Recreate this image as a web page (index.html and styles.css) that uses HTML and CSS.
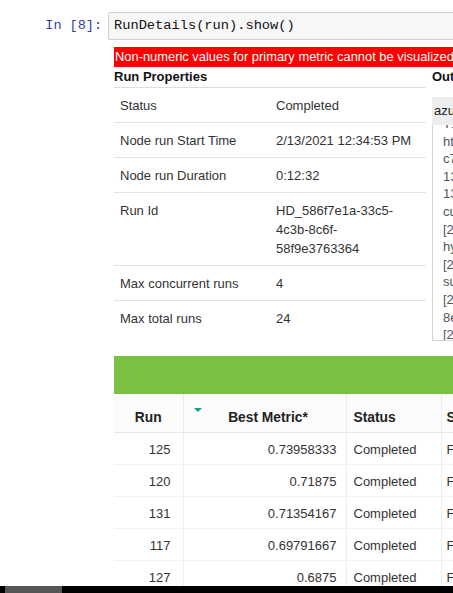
FILE: index.html
```html
<!DOCTYPE html>
<html>
<head>
<meta charset="utf-8">
<link rel="stylesheet" href="styles.css">
</head>
<body>
<div class="cell">
  <div class="input-row">
    <div class="prompt">In&nbsp;[8]:</div>
    <div class="input">RunDetails(run).show()</div>
  </div>
  <div class="output">
    <div class="error">Non-numeric values for primary metric cannot be visualized.</div>
    <div class="details">
      <div class="props">
        <div class="section-title">Run Properties</div>
        <div class="prop-row"><div class="k">Status</div><div class="v">Completed</div></div>
        <div class="prop-row"><div class="k">Node run Start Time</div><div class="v">2/13/2021 12:34:53 PM</div></div>
        <div class="prop-row"><div class="k">Node run Duration</div><div class="v">0:12:32</div></div>
        <div class="prop-row"><div class="k">Run Id</div><div class="v">HD_586f7e1a-33c5-4c3b-8c6f-58f9e3763364</div></div>
        <div class="prop-row"><div class="k">Max concurrent runs</div><div class="v">4</div></div>
        <div class="prop-row last"><div class="k">Max total runs</div><div class="v">24</div></div>
      </div>
      <div class="out">
        <div class="section-title">Output Logs</div>
        <div class="log-head">azureml-logs/hyperdrive.txt</div>
        <div class="log-box">
          <div class="log-text">
            <div>T12:34:53.611Z</div>
            <div>https://southcentralus.experiments.azureml.net</div>
            <div>c7e6d1a2-81f4-4be4-9f2c</div>
            <div>13:34:54.371556][GENERATOR][INFO]</div>
            <div>13:35:24.842316][GENERATOR][INFO]</div>
            <div>current status is running</div>
            <div>[2021-02-13T12:35:25.0135][SCHEDULER]</div>
            <div>hyperparameter sampling</div>
            <div>[2021-02-13T12:35:25.4321][SCHEDULER]</div>
            <div>successfully scheduled</div>
            <div>[2021-02-13T12:46:25.5120][CONTROLLER]</div>
            <div>8e1b24cd-run completed</div>
            <div>[2021-02-13T12:47:25.8712][CONTROLLER]</div>
          </div>
        </div>
      </div>
    </div>
    <div class="greenbar"></div>
    <table class="runs">
      <thead>
        <tr>
          <th class="c-run">Run</th>
          <th class="c-metric"><span class="sort"></span>Best Metric*</th>
          <th class="c-status">Status</th>
          <th class="c-start">Started</th>
        </tr>
      </thead>
      <tbody>
        <tr><td class="c-run">125</td><td class="c-metric">0.73958333</td><td class="c-status">Completed</td><td class="c-start">Feb 13, 2021 12:57 PM</td></tr>
        <tr><td class="c-run">120</td><td class="c-metric">0.71875</td><td class="c-status">Completed</td><td class="c-start">Feb 13, 2021 12:55 PM</td></tr>
        <tr><td class="c-run">131</td><td class="c-metric">0.71354167</td><td class="c-status">Completed</td><td class="c-start">Feb 13, 2021 12:59 PM</td></tr>
        <tr><td class="c-run">117</td><td class="c-metric">0.69791667</td><td class="c-status">Completed</td><td class="c-start">Feb 13, 2021 12:54 PM</td></tr>
        <tr><td class="c-run">127</td><td class="c-metric">0.6875</td><td class="c-status">Completed</td><td class="c-start">Feb 13, 2021 12:58 PM</td></tr>
      </tbody>
    </table>
  </div>
</div>
<div class="hscroll"><div class="thumb"></div></div>
</body>
</html>
```

FILE: styles.css
```css
html, body {
  margin: 0;
  padding: 0;
  background: #fff;
}
body {
  width: 453px;
  height: 593px;
  overflow: hidden;
  position: relative;
  font-family: "Liberation Sans", Arial, sans-serif;
  color: #333;
}
.cell {
  width: 900px;
  padding-top: 12px;
}
.input-row {
  display: flex;
  align-items: stretch;
}
.prompt {
  width: 108px;
  box-sizing: border-box;
  padding-right: 6px;
  text-align: right;
  font-family: "Liberation Mono", "Courier New", monospace;
  font-size: 13.5px;
  line-height: 28px;
  color: #303f9f;
}
.input {
  flex: 1;
  height: 28px;
  box-sizing: border-box;
  border: 1px solid #cfcfcf;
  border-radius: 2px;
  background: #f7f7f7;
  padding-left: 5px;
  font-family: "Liberation Mono", "Courier New", monospace;
  font-size: 13.7px;
  line-height: 26px;
  color: #111;
}
.output {
  margin-left: 114px;
  margin-top: 7px;
}
.error {
  height: 20px;
  line-height: 20px;
  background: #ff0000;
  color: #fff;
  font-size: 12.9px;
  padding-left: 1px;
  white-space: nowrap;
}
.details {
  display: flex;
  align-items: flex-start;
}
.props {
  width: 312px;
  flex: none;
}
.section-title {
  height: 20px;
  line-height: 20px;
  font-weight: bold;
  font-size: 13px;
  color: #111;
  border-bottom: 1px solid #ddd;
  white-space: nowrap;
}
.prop-row {
  display: grid;
  grid-template-columns: 162px 150px;
  padding: 8px 0 7px;
  line-height: 19px;
  font-size: 13px;
  color: #333;
  border-bottom: 1px solid #e4e4e4;
}
.prop-row.last {
  border-bottom: none;
}
.prop-row .k {
  padding-left: 6px;
}
.prop-row .v {
  padding-right: 10px;
}
.out {
  margin-left: 6px;
  width: 300px;
  flex: none;
}
.out .section-title {
  border-bottom: none;
}
.log-head {
  margin-top: 10px;
  height: 28px;
  line-height: 28px;
  background: #ededed;
  font-size: 13px;
  padding-left: 2px;
  color: #222;
  white-space: nowrap;
}
.log-box {
  height: 215px;
  border-left: 1px solid #d4d4d4;
  border-bottom: 1px solid #d4d4d4;
  overflow: hidden;
}
.log-text {
  margin-top: -10px;
  padding-left: 10px;
  font-size: 13px;
  line-height: 17.6px;
  color: #555;
  white-space: nowrap;
}
.greenbar {
  margin-top: 15px;
  height: 38px;
  background: #7ac143;
}
.runs {
  border-collapse: collapse;
  table-layout: fixed;
  width: 447px;
  font-size: 13px;
}
.runs th,
.runs td {
  box-sizing: border-box;
}
.runs th {
  height: 38px;
  padding: 9px 0 0;
  font-weight: bold;
  font-size: 13.8px;
  color: #222;
  background: #fcfcfc;
  border-bottom: 1px solid #e8e8e8;
  border-left: 1px solid #ececec;
  position: relative;
  text-align: center;
}
.runs td {
  height: 32px;
  padding: 2px 0 0;
  color: #333;
  border-bottom: 1px solid #f0f0f0;
  border-left: 1px solid #ececec;
  white-space: nowrap;
  overflow: hidden;
}
.runs th:first-child,
.runs td:first-child {
  border-left: none;
}
.runs .c-run { width: 69px; }
.runs .c-metric { width: 163px; }
.runs .c-status { width: 95px; }
.runs .c-start { width: 120px; }
.runs td.c-run {
  text-align: right;
  padding-right: 12px;
}
.runs th.c-metric {
  padding-left: 7px;
}
.runs td.c-metric {
  text-align: right;
  padding-right: 9px;
}
.runs th.c-status,
.runs td.c-status {
  text-align: left;
  padding-left: 7px;
}
.runs th.c-start,
.runs td.c-start {
  text-align: left;
  padding-left: 5px;
}
.sort {
  position: absolute;
  left: 10px;
  top: 14px;
  width: 0;
  height: 0;
  border-left: 4px solid transparent;
  border-right: 4px solid transparent;
  border-top: 4px solid #1f9e89;
}
.hscroll {
  position: absolute;
  left: 0;
  right: 0;
  bottom: 0;
  height: 7px;
  background: #000;
}
.thumb {
  margin-left: 5px;
  width: 57px;
  height: 7px;
  background: #555;
}
```
